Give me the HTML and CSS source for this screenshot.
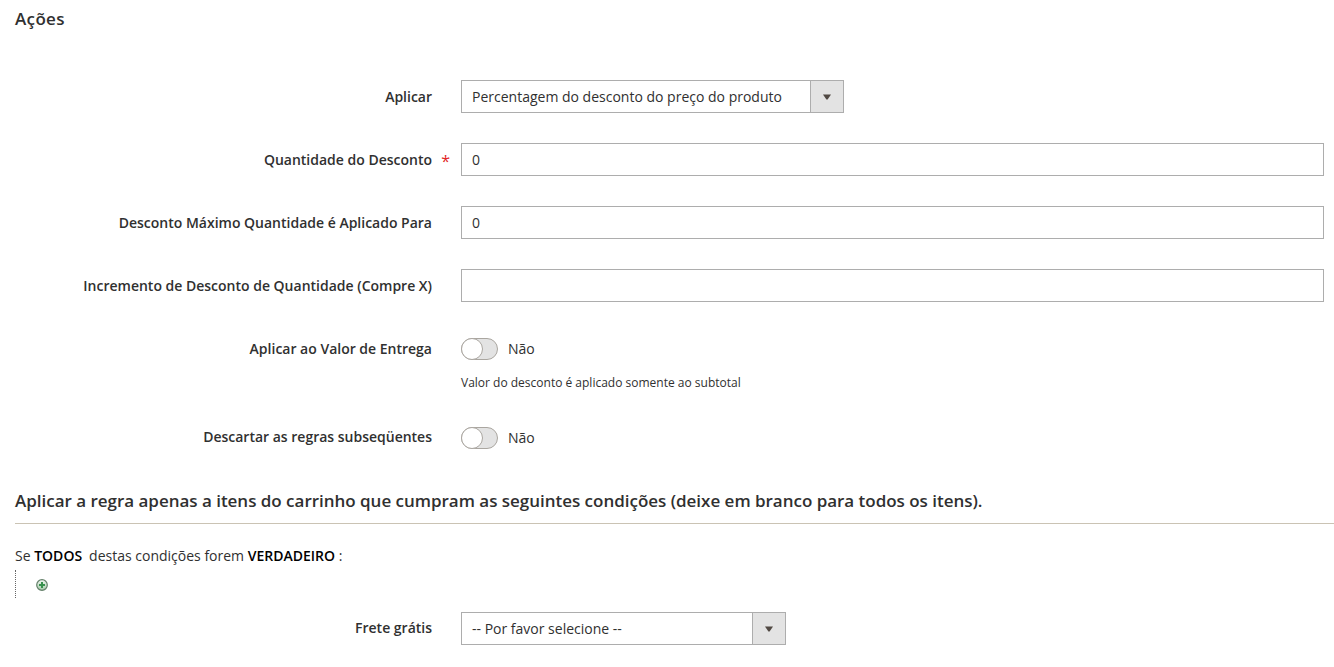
FILE: index.html
```
<!DOCTYPE html>
<html lang="pt-BR">
<head>
<meta charset="utf-8">
<title>Ações</title>
<link rel="stylesheet" href="styles.css">
</head>
<body>
<main class="page">
  <h1 class="title">Ações</h1>
  <form class="fields">
    <div class="field"><span class="label">Aplicar</span>
      <div class="select select-wide"><span class="value">Percentagem do desconto do preço do produto</span><span class="arrow"><svg width="8" height="6" viewBox="0 0 8 6"><path d="M0 .5h8L4.6 5.5H3.4z"/></svg></span></div></div>
    <div class="field"><span class="label required">Quantidade do Desconto</span><div class="input">0</div></div>
    <div class="field"><span class="label">Desconto Máximo Quantidade é Aplicado Para</span><div class="input">0</div></div>
    <div class="field"><span class="label">Incremento de Desconto de Quantidade (Compre X)</span><div class="input"></div></div>
    <div class="field field-note"><span class="label">Aplicar ao Valor de Entrega</span>
      <div class="control"><div class="toggle"><span class="track"><span class="knob"></span></span><span>Não</span></div><p class="note">Valor do desconto é aplicado somente ao subtotal</p></div></div>
    <div class="field"><span class="label">Descartar as regras subseqüentes</span>
      <div class="toggle toggle-last"><span class="track"><span class="knob"></span></span><span>Não</span></div></div>
  </form>
  <h2 class="legend">Aplicar a regra apenas a itens do carrinho que cumpram as seguintes condições (deixe em branco para todos os itens).</h2>
  <div class="rule"><span>Se <b>TODOS</b></span><span class="rule-rest">destas condições forem <b>VERDADEIRO</b> :</span></div>
  <div class="children"><svg width="12" height="12" viewBox="0 0 12 12"><defs><linearGradient id="badge" x2="0" y2="1"><stop stop-color="#f2f7f2"/><stop offset="1" stop-color="#a5cba9"/></linearGradient></defs><circle cx="6" cy="6" r="5.3" fill="url(#badge)" stroke="#64806a" stroke-width="1.2"/><path d="M6 3v6M3 6h6" stroke="#38914e" stroke-width="2"/></svg></div>
  <div class="field shipping"><span class="label">Frete grátis</span>
    <div class="select select-narrow"><span class="value">-- Por favor selecione --</span><span class="arrow"><svg width="8" height="6" viewBox="0 0 8 6"><path d="M0 .5h8L4.6 5.5H3.4z"/></svg></span></div></div>
</main>
</body>
</html>
```
FILE: styles.css
```
* { box-sizing: border-box; }
body { margin: 0; background: #fff; color: #303030; font: 14px/19px "Open Sans", "Noto Sans", sans-serif; overflow: hidden; }
.page { padding-left: 15px; }
.title { margin: 0; padding-top: 8px; height: 80px; font-size: 17px; line-height: 22px; font-weight: 600; letter-spacing: .35px; }
.fields { display: flex; flex-direction: column; gap: 30px; }
.field { display: grid; grid-template-columns: 417px 1fr; column-gap: 29px; height: 33px; padding-right: 10px; }
.field-note { height: 58px; }
.label { position: relative; line-height: 33px; text-align: right; font-weight: 600; letter-spacing: -.003px; white-space: nowrap; }
.required::after { content: "*"; position: absolute; right: -18px; top: 2px; color: #e22626; font-size: 16px; font-weight: 400; }
.input { height: 33px; border: 1px solid #adadad; padding: 0 10px; line-height: 31px; }
.select { display: flex; height: 33px; border: 1px solid #adadad; line-height: 31px; }
.select-wide { width: 383px; }
.select-narrow { width: 325px; }
.value { flex: 1; padding-left: 10px; white-space: nowrap; }
.arrow { width: 33px; display: flex; align-items: center; justify-content: center; background: #e3e3e3; border-left: 1px solid #adadad; fill: #514943; }
.toggle { display: flex; align-items: center; gap: 10px; height: 33px; }
.toggle-last { margin-top: 1px; }
.track { width: 37px; height: 22px; border: 1px solid #aaa6a0; border-radius: 11px; background: #e3e3e3; }
.knob { display: block; width: 22px; height: 22px; margin: -1px 0 0 -1px; border: 1px solid #aaa6a0; border-radius: 50%; background: #fff; }
.note { margin: 9px 0 0; font-size: 12px; line-height: 17px; }
.legend { margin: 37px 0 0; height: 34px; border-bottom: 1px solid #cac3b4; font-size: 17px; line-height: 22px; font-weight: 600; letter-spacing: -.02px; white-space: nowrap; }
.rule { display: flex; gap: 7px; margin-top: 22px; height: 24px; line-height: 20px; }
.rule b { color: #000; font-weight: 600; }
.children { height: 28px; border-left: 1px dotted #666; padding: 9px 0 0 20px; line-height: 0; }
.shipping { margin-top: 14px; }
.shipping .label { line-height: 31px; }
```
